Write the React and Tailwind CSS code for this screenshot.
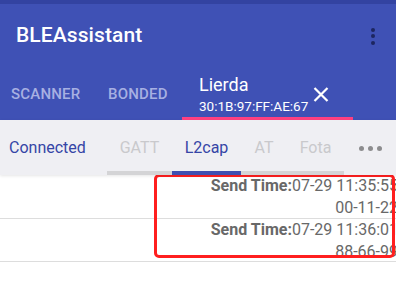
import React from "react";

const rows = [
  { time: "07-29 11:35:55", data: "00-11-22", h: "h-[44px]" },
  { time: "07-29 11:36:01", data: "88-66-99", h: "h-[43px]" },
];

const subTabs = [
  { label: "GATT", w: "w-[65px]", active: false },
  { label: "L2cap", w: "w-[69px]", active: true },
  { label: "AT", w: "w-[46px]", active: false },
  { label: "Fota", w: "w-[57px]", active: false },
];

const App = () => {
  return (
    <div className="relative w-[396px] h-[282px] overflow-hidden bg-white font-['Roboto',sans-serif]">
      {/* status bar */}
      <div className="h-1 bg-[#3343a1]" />

      <div className="bg-[#3f51b5]">
        <div className="h-[64px] flex items-center justify-between pl-4 pr-[21px]">
          <span className="text-white text-[21px] font-medium tracking-[0.1px]">
            BLEAssistant
          </span>
          <div className="flex flex-col gap-[2.5px]">
            <span className="w-1 h-1 rounded-full bg-[#1d2660]" />
            <span className="w-1 h-1 rounded-full bg-[#1d2660]" />
            <span className="w-1 h-1 rounded-full bg-[#1d2660]" />
          </div>
        </div>

        <div className="h-[52px] flex">
          <div className="w-[108px] pl-[11px] flex items-center text-[15px] font-medium tracking-[0.2px] text-[#a7b0e2]">
            SCANNER
          </div>
          <div className="w-[74px] flex items-center text-[15px] font-medium tracking-[0.2px] text-[#a7b0e2]">
            BONDED
          </div>
          <div className="w-[171px] flex border-b-[3px] border-[#ff4081]">
            <div className="pl-[17px] pt-[7px] flex flex-col">
              <span className="text-white text-[18px] leading-[20px]">Lierda</span>
              <span className="text-white text-[13.5px] leading-[16px] mt-[3px]">
                30:1B:97:FF:AE:67
              </span>
            </div>
            <svg
              className="ml-auto mr-[24px] mt-[19px]"
              width="16"
              height="15"
              viewBox="0 0 16 15"
              fill="none"
              stroke="white"
              strokeWidth="2.2"
            >
              <path d="M1.5 1 L14.5 14 M14.5 1 L1.5 14" />
            </svg>
          </div>
        </div>
      </div>

      <div className="relative z-10 h-[55px] flex bg-[#efeff3] shadow-[0_1px_3px_rgba(0,0,0,0.1)]">
        <div className="w-[107px] pl-[9px] pt-[1px] flex items-center text-[16px] text-[#3545a6]">
          Connected
        </div>
        {subTabs.map((t) => (
          <div key={t.label} className={`${t.w} flex flex-col`}>
            <div
              className={`flex-1 pt-[5px] flex items-center justify-center text-[16px] ${
                t.active ? "text-[#3545a6]" : "text-[#c9c9cc]"
              }`}
            >
              {t.label}
            </div>
            <div className={`h-1 ${t.active ? "bg-[#3f4fb0]" : "bg-[#d4d4d6]"}`} />
          </div>
        ))}
        <div className="ml-[15px] flex items-center gap-1 pt-[1px]">
          <span className="w-[5px] h-[5px] rounded-full bg-[#8c8c8e]" />
          <span className="w-[5px] h-[5px] rounded-full bg-[#8c8c8e]" />
          <span className="w-[5px] h-[5px] rounded-full bg-[#8c8c8e]" />
        </div>
      </div>

      <div className="bg-white">
        {rows.map((r) => (
          <div key={r.time} className={`${r.h} overflow-hidden border-b border-[#dddddd]`}>
            <div className="w-[398px] text-right whitespace-nowrap text-[16px] leading-[22px] text-[#686868]">
              <div>
                <span className="font-bold">Send Time:</span>
                {r.time}
              </div>
              <div>{r.data}</div>
            </div>
          </div>
        ))}
      </div>

      {/* red annotation box */}
      <div className="absolute left-[154px] top-[174px] w-[241px] h-[84px] border-[3px] border-[#ff1f1f] rounded-[5px]" />
    </div>
  );
};

export default App;
